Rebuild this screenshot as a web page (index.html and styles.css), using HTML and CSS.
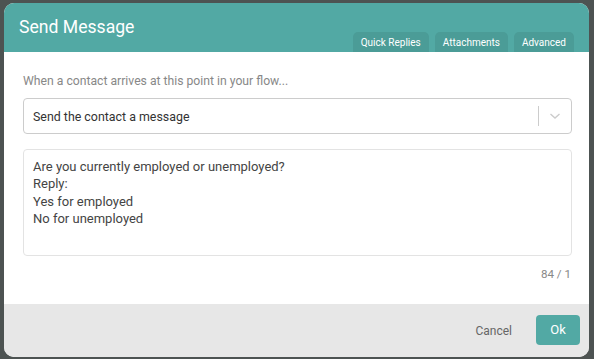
FILE: index.html
```html
<!DOCTYPE html>
<html>
<head>
<meta charset="utf-8">
<link rel="stylesheet" href="styles.css">
</head>
<body>
<div class="modal">
  <div class="header">
    <div class="title">Send Message</div>
    <div class="tabs">
      <div class="tab">Quick Replies</div>
      <div class="tab">Attachments</div>
      <div class="tab">Advanced</div>
    </div>
  </div>
  <div class="body">
    <div class="intro">When a contact arrives at this point in your flow...</div>
    <div class="select">
      <div class="select-value">Send the contact a message</div>
      <div class="select-sep"></div>
      <div class="select-arrow">
        <svg width="12" height="8" viewBox="0 0 12 8"><path d="M1.5 2 L6 6 L10.5 2" fill="none" stroke="#cccccc" stroke-width="1.4"/></svg>
      </div>
    </div>
    <div class="textarea">Are you currently employed or unemployed?<br>Reply:<br>Yes for employed<br>No for unemployed</div>
    <div class="counter">84 / 1</div>
  </div>
  <div class="footer">
    <div class="cancel">Cancel</div>
    <div class="ok">Ok</div>
  </div>
</div>
</body>
</html>
```

FILE: styles.css
```css
html, body {
  margin: 0;
  height: 100%;
}
body {
  background: #4d5352;
  padding: 3px 5px 0 4px;
  box-sizing: border-box;
  font-family: Roboto, "Liberation Sans", sans-serif;
  overflow: hidden;
}
.modal {
  width: 585px;
  height: 354px;
  background: #ffffff;
  border-radius: 10px;
  overflow: hidden;
  display: flex;
  flex-direction: column;
}
.header {
  background: #52a9a4;
  height: 49px;
  display: flex;
  justify-content: space-between;
  align-items: flex-end;
  padding: 0 15px 0 15px;
  box-sizing: border-box;
}
.title {
  color: #ffffff;
  font-size: 17.6px;
  align-self: flex-start;
  margin-top: 14px;
}
.tabs {
  display: flex;
  gap: 6px;
}
.tab {
  background: #4b9c97;
  color: #ffffff;
  font-size: 10px;
  height: 20px;
  line-height: 22px;
  padding: 0 8px;
  border-radius: 5px 5px 0 0;
}
.body {
  flex: 1;
  padding: 21px 17px 0 19px;
  display: flex;
  flex-direction: column;
}
.intro {
  color: #888888;
  font-size: 12.2px;
  line-height: 16px;
}
.select {
  margin-top: 9px;
  height: 36px;
  border: 1px solid #cccccc;
  border-radius: 4px;
  box-sizing: border-box;
  display: flex;
  align-items: center;
}
.select-value {
  flex: 1;
  padding-left: 9px;
  font-size: 12.4px;
  color: #333333;
}
.select-sep {
  width: 1px;
  height: 20px;
  background: #cccccc;
}
.select-arrow {
  width: 32px;
  display: flex;
  justify-content: center;
  align-items: center;
}
.textarea {
  margin-top: 15px;
  height: 107px;
  border: 1px solid #e3e3e3;
  border-radius: 4px;
  box-sizing: border-box;
  padding: 8px 9px;
  font-size: 13px;
  line-height: 17.3px;
  color: #444444;
}
.counter {
  text-align: right;
  color: #888888;
  font-size: 11.6px;
  margin-top: 11px;
  padding-right: 1px;
}
.footer {
  background: #e7e7e7;
  height: 53px;
  display: flex;
  justify-content: flex-end;
  align-items: center;
  padding: 0 9px 0 0;
  gap: 24px;
}
.cancel {
  color: #666666;
  font-size: 12px;
}
.ok {
  background: #52a9a4;
  color: #ffffff;
  font-size: 13px;
  width: 44px;
  height: 30px;
  line-height: 30px;
  text-align: center;
  border-radius: 4px;
  margin-top: -2px;
}
```
